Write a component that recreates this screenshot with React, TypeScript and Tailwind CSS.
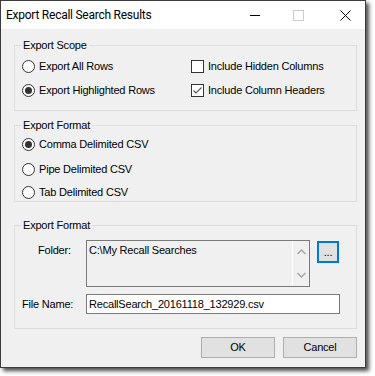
import React from "react";

function Radio({ checked }: { checked?: boolean }) {
  return (
    <span className="w-[13px] h-[13px] rounded-full border border-[#333333] bg-white flex items-center justify-center shrink-0">
      {checked && <span className="w-[7px] h-[7px] rounded-full bg-[#333333]" />}
    </span>
  );
}

function Check({ checked }: { checked?: boolean }) {
  return (
    <span className="w-[13px] h-[13px] border border-[#333333] bg-white flex items-center justify-center shrink-0">
      {checked && (
        <svg width="11" height="11" viewBox="0 0 11 11">
          <path d="M1.5 5.5 L4 8 L9.5 2.5" fill="none" stroke="#555" strokeWidth="1.1" />
        </svg>
      )}
    </span>
  );
}

function Option({ type, checked, label }: { type: "radio" | "check"; checked?: boolean; label: string }) {
  return (
    <div className="flex items-center h-[13px] gap-[4px]">
      {type === "radio" ? <Radio checked={checked} /> : <Check checked={checked} />}
      <span className="leading-[13px] whitespace-nowrap">{label}</span>
    </div>
  );
}

function Group({ title, className, children }: { title: string; className: string; children: React.ReactNode }) {
  return (
    <div className={`relative border border-[#dcdcdc] ${className}`}>
      <span className="absolute left-[6px] -top-[8px] px-[2px] bg-[#f0f0f0] leading-[14px] whitespace-nowrap">{title}</span>
      {children}
    </div>
  );
}

export default function App() {
  return (
    <div className="w-[375px] h-[376px] bg-white">
      <div className="w-[366px] h-[368px] bg-[#f0f0f0] border border-[#3c3c3c] shadow-[3px_3px_4px_rgba(0,0,0,0.7)] flex flex-col font-['Liberation_Sans',Arial,sans-serif] text-[11px] tracking-[-0.2px] text-black">
        <div className="h-[28px] bg-white flex items-center shrink-0">
          <span className="pl-[5px] pb-[1px] font-['Roboto',sans-serif] text-[12px] tracking-[-0.25px] leading-[16px] whitespace-nowrap">Export Recall Search Results</span>
          <div className="ml-auto flex items-center h-full pr-[14px]">
            <span className="w-[10px] h-[1px] bg-black" />
            <span className="ml-[33px] w-[11px] h-[11px] border border-[#cccccc]" />
            <svg className="ml-[36px]" width="11" height="11" viewBox="0 0 11 11">
              <path d="M0.5 0.5 L10.5 10.5 M10.5 0.5 L0.5 10.5" stroke="#000" strokeWidth="1" />
            </svg>
          </div>
        </div>

        <div className="pl-[13px] pr-[8px] flex flex-col">
          <Group title="Export Scope" className="mt-[16px] h-[66px]">
            <div className="pt-[14px] pl-[7px] grid grid-cols-[169px_1fr]">
              <div className="flex flex-col gap-[11px]">
                <Option type="radio" label="Export All Rows" />
                <Option type="radio" checked label="Export Highlighted Rows" />
              </div>
              <div className="flex flex-col gap-[11px]">
                <Option type="check" label="Include Hidden Columns" />
                <Option type="check" checked label="Include Column Headers" />
              </div>
            </div>
          </Group>

          <Group title="Export Format" className="mt-[14px] h-[77px]">
            <div className="pt-[12px] pl-[7px] flex flex-col">
              <Option type="radio" checked label="Comma Delimited CSV" />
              <div className="mt-[12px]">
                <Option type="radio" label="Pipe Delimited CSV" />
              </div>
              <div className="mt-[10px]">
                <Option type="radio" label="Tab Delimited CSV" />
              </div>
            </div>
          </Group>

          <Group title="Export Format" className="mt-[23px] h-[104px]">
            <div className="pt-[14px] flex flex-col">
              <div className="flex items-start">
                <span className="pl-[23px] w-[71px] mt-[4px] leading-[13px]">Folder:</span>
                <div className="w-[224px] h-[47px] border border-[#7a7a7a] bg-[#f0f0f0] flex">
                  <div className="flex-1 pl-[2px] pt-[3px] leading-[13px] whitespace-nowrap">C:\My Recall Searches</div>
                  <div className="w-[17px] border-l border-white flex flex-col items-center justify-between py-[8px]">
                    <svg width="9" height="6" viewBox="0 0 9 6">
                      <path d="M0.5 5 L4.5 1 L8.5 5" fill="none" stroke="#a6a6a6" strokeWidth="1.5" />
                    </svg>
                    <svg width="9" height="6" viewBox="0 0 9 6">
                      <path d="M0.5 1 L4.5 5 L8.5 1" fill="none" stroke="#a6a6a6" strokeWidth="1.5" />
                    </svg>
                  </div>
                </div>
                <button className="ml-[7px] mt-[1px] w-[22px] h-[22px] border-2 border-[#0078d7] bg-[#e1e1e1] flex items-center justify-center leading-[11px] text-[11px]">...</button>
              </div>
              <div className="flex items-center mt-[7px]">
                <span className="pl-[7px] w-[71px] leading-[13px]">File Name:</span>
                <div className="w-[254px] h-[20px] border border-[#7a7a7a] bg-white pl-[2px] flex items-center leading-[13px] whitespace-nowrap">RecallSearch_20161118_132929.csv</div>
              </div>
            </div>
          </Group>

          <div className="flex justify-end gap-[8px] mt-[8px]">
            <button className="w-[74px] h-[21px] border border-[#adadad] bg-[#e1e1e1] leading-[13px]">OK</button>
            <button className="w-[74px] h-[21px] border border-[#adadad] bg-[#e1e1e1] leading-[13px]">Cancel</button>
          </div>
        </div>
      </div>
    </div>
  );
}
